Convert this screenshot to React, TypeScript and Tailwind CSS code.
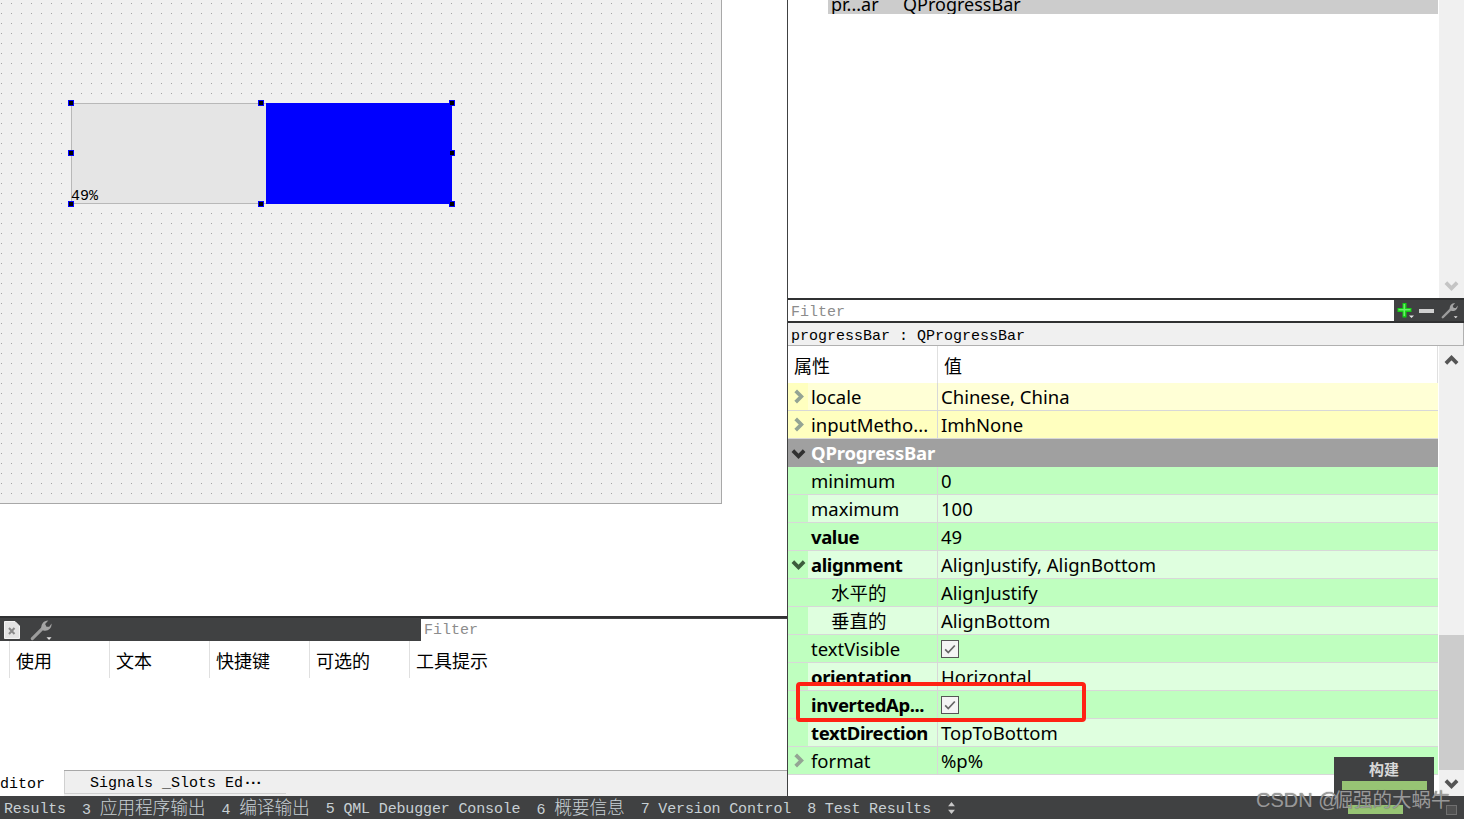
const sans = "font-['Noto_Sans','Noto_Sans_CJK_SC',sans-serif]";
const mono = "font-['Liberation_Mono','Noto_Sans_CJK_SC',monospace]";

const handles = [
  "left-[-3px] top-[-3px]",
  "left-[187px] top-[-3px]",
  "left-[378px] top-[-3px]",
  "left-[-3px] top-[47px]",
  "left-[378px] top-[47px]",
  "left-[-3px] top-[98px]",
  "left-[187px] top-[98px]",
  "left-[378px] top-[98px]",
];

type Row = {
  name: string;
  value?: string;
  bold?: boolean;
  child?: boolean;
  arrow?: "right" | "down";
  check?: boolean;
  tone: "y1" | "y2" | "g1" | "g2";
};

const rows: Row[] = [
  { name: "locale", value: "Chinese, China", arrow: "right", tone: "y1" },
  { name: "inputMetho...", value: "ImhNone", arrow: "right", tone: "y2" },
  { name: "minimum", value: "0", tone: "g1" },
  { name: "maximum", value: "100", tone: "g2" },
  { name: "value", value: "49", bold: true, tone: "g1" },
  { name: "alignment", value: "AlignJustify, AlignBottom", bold: true, arrow: "down", tone: "g2" },
  { name: "水平的", value: "AlignJustify", child: true, tone: "g1" },
  { name: "垂直的", value: "AlignBottom", child: true, tone: "g2" },
  { name: "textVisible", check: true, tone: "g1" },
  { name: "orientation", value: "Horizontal", bold: true, tone: "g2" },
  { name: "invertedAp...", check: true, bold: true, tone: "g1" },
  { name: "textDirection", value: "TopToBottom", bold: true, tone: "g2" },
  { name: "format", value: "%p%", arrow: "right", tone: "g1" },
];

const toneBg = {
  y1: "bg-[#ffffd6]",
  y2: "bg-[#ffffbf]",
  g1: "bg-[#bfffbf]",
  g2: "bg-[#dfffdf]",
};
const toneBranch = {
  y1: "bg-[#ffffbf]",
  y2: "bg-[#ffffbf]",
  g1: "bg-[#bfffbf]",
  g2: "bg-[#bfffbf]",
};

const Chevron = ({ dir, className }: { dir: "up" | "down" | "right"; className: string }) => {
  const d = dir === "up" ? "M2 11 L8 5 L14 11" : dir === "down" ? "M2 5 L8 11 L14 5" : "M5 2 L11 8 L5 14";
  return (
    <svg viewBox="0 0 16 16" className={className} fill="none" stroke="currentColor" strokeWidth="4">
      <path d={d} />
    </svg>
  );
};

const WrenchIcon = ({ className }: { className: string }) => (
  <svg viewBox="0 0 24 24" className={className}>
    <path d="M2.5 21.5 L14 10" stroke="#9c9c9c" strokeWidth="3.4" strokeLinecap="round" fill="none" />
    <path d="M12.5 11 C11.5 6 14.5 1.5 20 1.5 L16.5 5.5 L18 8.5 L21 8.5 L23.5 5 C24 10.5 19 14 14.5 12.5 Z" fill="#a4a4a4" />
    <path d="M18 20 h5.5 l-2.7 3 z" fill="#e4e4e4" />
  </svg>
);

const PlusIcon = () => (
  <svg viewBox="0 0 17 17" className="h-[17px] w-[17px]">
    <path d="M5.5 1 h4 v5 h5 v4 h-5 v5.5 h-4 v-5.5 h-5 v-4 h5 z" fill="#14cc14" />
    <path d="M6.5 2 h1.6 v12 h-1.6 z M1.5 7 h12 v1.6 h-12 z" fill="#66f066" />
    <path d="M12 13.5 h5 l-2.5 2.5 z" fill="#e4e4e4" />
  </svg>
);

const DocIcon = () => (
  <svg viewBox="0 0 16 18" className="h-[18px] w-[16px]">
    <path d="M0.5 0.5 H11 L15.5 5 V17.5 H0.5 Z" fill="#e4e4e4" stroke="#f4f4f4" />
    <path d="M5 7 L10.5 13 M10.5 7 L5 13" stroke="#8a8a8a" strokeWidth="2" />
  </svg>
);

const CheckBox = () => (
  <span className="flex h-[18px] w-[18px] items-center justify-center border border-[#555] bg-[#f4f4f4]">
    <svg viewBox="0 0 16 16" className="h-[14px] w-[14px]" fill="none" stroke="#666" strokeWidth="2">
      <path d="M2.5 8.5 L6 12 L13.5 4" />
    </svg>
  </span>
);

const PropertyRow = ({ row }: { row: Row }) => (
  <div className={`flex h-[28px] shrink-0 border-b border-[#d8d8d8] text-[18.5px] leading-[27px] text-black ${toneBg[row.tone]}`}>
    <div className={`flex w-[20px] shrink-0 items-center justify-center ${toneBranch[row.tone]}`}>
      {row.arrow === "right" && <Chevron dir="right" className="h-[15px] w-[15px] text-[#94a494]" />}
      {row.arrow === "down" && <Chevron dir="down" className="h-[15px] w-[15px] text-[#3c5c3c]" />}
    </div>
    <div className={`w-[130px] shrink-0 overflow-hidden whitespace-nowrap border-r border-[#d8d8d8] ${row.child ? "pl-[23px]" : "pl-[3px]"} ${row.bold ? "font-bold tracking-[-0.4px]" : ""}`}>
      {row.name}
    </div>
    <div className="flex items-center pl-[3px] whitespace-nowrap">
      {row.check ? <CheckBox /> : row.value}
    </div>
  </div>
);

const dotted =
  "bg-[#f0f0f0] bg-[conic-gradient(at_1px_1px,transparent_75%,#a4a4a4_75%)] bg-[size:10px_10px] bg-[position:1px_3px]";

const columns = ["使用", "文本", "快捷键", "可选的", "工具提示"];

const LeftPane = () => (
  <div className="flex w-[788px] shrink-0 flex-col border-r border-[#404142]">
    <div className="h-[616px] shrink-0 bg-white">
      <div className={`h-[504px] w-[722px] overflow-hidden border-r border-b border-[#a8a8a8] pl-[71px] pt-[103px] ${dotted}`}>
        <div className="relative flex h-[101px] w-[381px]">
          <div className="flex w-[195px] items-end border-y border-l border-[#b8b8b8] bg-[#e5e5e5]">
            <span className={`${mono} mb-[-2px] ml-[-1px] text-[15px] leading-[17px] text-black`}>49%</span>
          </div>
          <div className="flex-1 bg-[#0000ff]" />
          {handles.map((h) => (
            <span key={h} className={`absolute h-[6px] w-[6px] border border-[#0000ff] bg-black ${h}`} />
          ))}
        </div>
      </div>
    </div>

    <div className="flex h-[25px] shrink-0 items-center border-t-2 border-[#303132] bg-[#404142]">
      <div className="ml-[4px]"><DocIcon /></div>
      <div className="ml-[10px]"><WrenchIcon className="h-[22px] w-[22px]" /></div>
      <div className={`${mono} ml-[369px] flex h-[22px] flex-1 items-center bg-white pl-[3px] pt-[4px] text-[15px] text-[#8c8c8c]`}>
        Filter
      </div>
    </div>

    <div className="flex-1 bg-white">
      <div className="flex h-[37px] pl-[9px] text-[18px] text-black">
        {columns.map((c) => (
          <div key={c} className={`${sans} w-[100px] border-l border-[#e0e0e0] pl-[6px] leading-[40px]`}>
            {c}
          </div>
        ))}
      </div>
    </div>

    <div className={`${mono} flex h-[26px] shrink-0 border-t border-[#a8a8a8] bg-[#efefef] text-[15px] text-black`}>
      <div className="mt-[-1px] w-[64px] bg-white pt-[5px] leading-[20px]">ditor</div>
      <div className="h-[23px] w-[222px] border-b border-l border-[#d0d0d0] pl-[25px] pt-[3px] leading-[20px]">
        Signals _Slots Ed<span className="font-bold tracking-[-3.4px]">···</span>
      </div>
    </div>
  </div>
);

const RightPane = () => (
  <div className="flex flex-1 flex-col">
    <div className="flex h-[298px] shrink-0">
      <div className={`${sans} w-[651px] bg-white pl-[40px] pr-[1px]`}>
        <div className="flex h-[14px] items-end overflow-hidden bg-[#cccccc] pl-[3px] text-[18px] text-black">
          <span className="mb-[-2px] w-[72px] leading-[24px]">pr...ar</span>
          <span className="mb-[-2px] leading-[24px]">QProgressBar</span>
        </div>
      </div>
      <div className="flex flex-1 flex-col justify-end bg-[#f0f0f0]">
        <div className="flex h-[26px] items-center justify-center text-[#c4c4c4]">
          <Chevron dir="down" className="h-[15px] w-[15px]" />
        </div>
      </div>
    </div>

    <div className="flex h-[25px] shrink-0 border-y-2 border-[#303132] bg-[#404142]">
      <div className={`${mono} flex w-[606px] items-center bg-white pl-[3px] pt-[5px] text-[15px] text-[#8c8c8c]`}>Filter</div>
      <div className="flex flex-1 items-center pl-[3px]">
        <PlusIcon />
        <span className="ml-[5px] h-[4px] w-[15px] bg-[#d0d0d0]" />
        <div className="ml-[7px] flex"><WrenchIcon className="h-[17px] w-[17px]" /></div>
      </div>
    </div>

    <div className={`${mono} h-[23px] shrink-0 border-r border-b border-[#b0b0b0] bg-[#f0f0f0] pl-[3px] pt-[3px] text-[15px] leading-[22px] text-black`}>
      progressBar : QProgressBar
    </div>

    <div className={`${sans} flex min-h-0 flex-1`}>
      <div className="flex w-[651px] flex-col bg-white pr-[1px]">
        <div className="flex h-[37px] shrink-0 text-[18px] leading-[40px] text-black">
          <div className="w-[150px] border-r border-[#e0e0e0] pl-[6px]">属性</div>
          <div className="flex-1 border-r border-[#e0e0e0] pl-[6px]">值</div>
        </div>
        {rows.slice(0, 2).map((r) => (
          <PropertyRow key={r.name} row={r} />
        ))}
        <div className="flex h-[28px] shrink-0 bg-[#a0a0a0] text-[18.5px] font-bold leading-[27px] tracking-[-0.2px] text-white">
          <div className="flex w-[20px] items-center justify-center text-[#303030]">
            <Chevron dir="down" className="h-[15px] w-[15px]" />
          </div>
          <div className="pl-[3px]">QProgressBar</div>
        </div>
        {rows.slice(2).map((r) => (
          <PropertyRow key={r.name} row={r} />
        ))}
      </div>
      <div className="flex flex-1 flex-col bg-[#f0f0f0]">
        <div className="flex h-[28px] items-center justify-center text-[#555]">
          <Chevron dir="up" className="h-[15px] w-[15px]" />
        </div>
        <div className="flex-1" />
        <div className="h-[135px] bg-[#cccccc]" />
        <div className="flex h-[26px] items-center justify-center text-[#555]">
          <Chevron dir="down" className="h-[15px] w-[15px]" />
        </div>
      </div>
    </div>
  </div>
);

const StatusBar = () => (
  <div className={`${mono} flex h-[23px] shrink-0 items-center gap-[16px] whitespace-nowrap bg-[#404142] pl-[4px] pt-[4px] text-[15px] leading-[18px] tracking-[-0.15px] text-[#c8d0d4]`}>
    <span>Results</span>
    <span>3 <span className="text-[17.8px] font-light leading-[18px]">应用程序输出</span></span>
    <span>4 <span className="text-[17.8px] font-light leading-[18px]">编译输出</span></span>
    <span>5 QML Debugger Console</span>
    <span>6 <span className="text-[17.8px] font-light leading-[18px]">概要信息</span></span>
    <span>7 Version Control</span>
    <span>8 Test Results</span>
    <svg viewBox="0 0 10 14" className="mt-[-4px] h-[12px] w-[9px]" fill="#c8c8c8">
      <path d="M5 0 L9 5 H1 Z M5 14 L1 9 H9 Z" />
    </svg>
  </div>
);

export default function App() {
  return (
    <div className="relative flex h-[819px] w-[1464px] flex-col overflow-hidden bg-white">
      <div className="flex h-[796px] shrink-0">
        <LeftPane />
        <RightPane />
      </div>
      <StatusBar />

      {/* red annotation box */}
      <div className="absolute left-[796px] top-[682px] h-[40px] w-[290px] rounded-[4px] border-[4px] border-[#ff2314]" />

      {/* build progress popup */}
      <div className="absolute left-[1334px] top-[757px] flex h-[39px] w-[100px] flex-col items-center bg-[#404142]">
        <span className={`${sans} text-[15px] font-bold leading-[24px] text-[#d8d8d8]`}>构建</span>
        <span className="h-[9px] w-[85px] bg-[#97c474]" />
      </div>
      <span className="absolute left-[1348px] top-[805px] h-[9px] w-[55px] bg-[#97c474]" />
      <span className="absolute left-[1446px] top-[805px] h-[10px] w-[11px] border border-[#707070] bg-[#505050]" />

      {/* watermark */}
      <span className="absolute left-[1256px] top-[786px] whitespace-nowrap font-['Liberation_Sans','Noto_Sans_CJK_SC',sans-serif] text-[20px] leading-[28px] text-[#b0b0b0]/80 [text-shadow:0_0_1px_#444]">
        CSDN @<span className="ml-[-5px] text-[19.5px]">倔强的大蜗牛</span>
      </span>
    </div>
  );
}
